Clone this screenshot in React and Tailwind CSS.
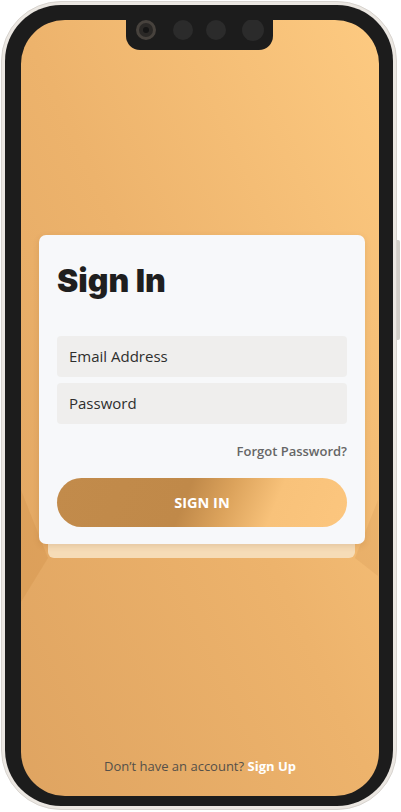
import React from 'react';

const Notch = () => (
  <div className="absolute top-0 left-[105px] w-[147px] h-[30px] rounded-b-[14px] bg-[#1c1c1c] flex items-start pl-[10px] pt-0">
    <div className="w-[20px] h-[20px] rounded-full bg-[#2a2826] border-[3px] border-[#47423d] flex items-center justify-center">
      <div className="w-[6px] h-[6px] rounded-full bg-[#151515]" />
    </div>
    <div className="ml-[17px] w-[20px] h-[20px] rounded-full bg-[#2b2b2b]" />
    <div className="ml-[13px] w-[20px] h-[20px] rounded-full bg-[#2b2b2b]" />
    <div className="ml-[16px] -mt-[1px] w-[22px] h-[22px] rounded-full bg-[#2b2b2b]" />
  </div>
);

const App = () => {
  return (
    <div className="w-[401px] h-[812px] bg-white relative" style={{ fontFamily: '"Open Sans", "Liberation Sans", sans-serif' }}>
      {/* side button */}
      <div className="absolute left-[396px] top-[240px] w-[4px] h-[100px] rounded-r-[2px] bg-[#d3cfca]" />

      <div className="absolute left-[1px] top-[1px] w-[396px] h-[809px] rounded-[60px] bg-[#ebe7e2] border border-[#d8d4cf] p-[3px]">
        <div className="w-full h-full rounded-[56px] bg-[#1c1c1c] pl-[16px] pr-[14px] pt-[15px] pb-[10px]">
          <div className="relative w-full h-full rounded-[44px] overflow-hidden flex flex-col bg-linear-to-bl from-[#fdca81] via-[#edb36c] to-[#dfa461]">
            {/* soft diagonal shapes under the card */}
            <svg className="absolute inset-0" width="357" height="773" viewBox="0 0 357 773">
              <polygon points="0,470 27,538 0,582" fill="#b8742e" fillOpacity="0.16" />
              <polygon points="357,480 334,538 357,556" fill="#b8742e" fillOpacity="0.12" />
            </svg>

            <Notch />

            <div className="relative mt-[215px] ml-[18px] w-[326px]">
              <div className="absolute left-[9px] right-[10px] top-[20px] bottom-[-14px] rounded-[6px] bg-[#f6dcb7]" />
              <div className="relative rounded-[7px] bg-[#f7f8fa] px-[18px] pt-[26px] pb-[17px] shadow-[0_2px_6px_rgba(120,70,20,0.15)]">
                <h1 className="text-[32px] leading-[40px] font-black text-[#1f1f1f]" style={{ fontFamily: 'Inter, "Liberation Sans", sans-serif' }}>
                  Sign In
                </h1>
                <div className="mt-[35px] flex flex-col gap-[6px]">
                  <div className="h-[41px] rounded-[4px] bg-[#efeeed] flex items-center px-[12px] text-[15px] text-[#2e2e2e]">
                    Email Address
                  </div>
                  <div className="h-[41px] rounded-[4px] bg-[#efeeed] flex items-center px-[12px] text-[15px] text-[#2e2e2e]">
                    Password
                  </div>
                </div>
                <div className="mt-[18px] text-right text-[13px] leading-[18px] font-semibold text-[#666666]">
                  Forgot Password?
                </div>
                <button className="mt-[18px] w-full h-[49px] rounded-full text-white text-[14.5px] font-bold bg-[linear-gradient(112deg,#c28b4b_0%,#c08949_44%,#dca35c_58%,#f8c27a_74%,#fcc67e_100%)]">
                  SIGN IN
                </button>
              </div>
            </div>

            <div className="mt-auto mb-[20px] text-center text-[13px] leading-[20px] text-[#555049]">
              Don’t have an account? <span className="font-bold text-white">Sign Up</span>
            </div>
          </div>
        </div>
      </div>
    </div>
  );
};

export default App;
